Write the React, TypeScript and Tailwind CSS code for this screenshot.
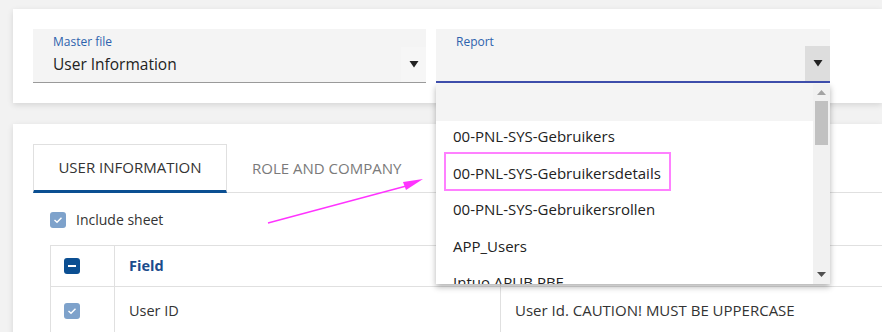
import React from 'react';

const font = { fontFamily: '"Open Sans", "Liberation Sans", sans-serif' };

const reports = [
  '',
  '00-PNL-SYS-Gebruikers',
  '00-PNL-SYS-Gebruikersdetails',
  '00-PNL-SYS-Gebruikersrollen',
  'APP_Users',
  'Intuo APUB PBE',
];

function Caret({ className = '' }: { className?: string }) {
  return (
    <svg width="10" height="7" viewBox="0 0 10 7" className={className}>
      <path d="M0.5 0 L9.5 0 L5 6.5 Z" fill="currentColor" />
    </svg>
  );
}

function Check({ dark = false, minus = false }: { dark?: boolean; minus?: boolean }) {
  return (
    <span
      className={`flex items-center justify-center w-4 h-4 rounded-[3px] ${dark ? 'bg-[#0b4f92]' : 'bg-[#7ea2cb]'}`}
    >
      {minus ? (
        <span className="block w-2 h-[2px] bg-white" />
      ) : (
        <svg width="10" height="8" viewBox="0 0 10 8">
          <path d="M1.5 4 L4 6.3 L8.5 1.7" stroke="white" strokeWidth="1.4" fill="none" />
        </svg>
      )}
    </span>
  );
}

export default function App() {
  return (
    <div className="relative w-[882px] h-[332px] overflow-hidden bg-[#f2f2f2] text-[#222]" style={font}>
      {/* Top card with selects */}
      <div className="ml-[13px] mt-[9px] h-[94px] bg-white shadow-[0_2px_6px_rgba(0,0,0,0.12)] pl-5 pt-5">
        <div className="flex gap-[10px]">
          <div className="relative w-[393px] h-[54px] bg-[#f4f4f4] border-b border-[#9a9a9a]">
            <div className="pl-5 pt-[5px] text-[12px] leading-4 text-[#2d62ad]">Master file</div>
            <div className="pl-5 pt-[4px] text-[15.5px] leading-5 text-[#222]">User Information</div>
            <div className="absolute right-0 bottom-0 w-[25px] h-[35px] bg-[#f6f6f6] flex items-center justify-center text-[#222]">
              <Caret />
            </div>
          </div>
          <div className="relative w-[394px] h-[54px] bg-[#f4f4f4] border-b-2 border-[#3f4fae]">
            <div className="pl-5 pt-[5px] text-[12px] leading-4 text-[#2d62ad]">Report</div>
            <div className="absolute right-0 bottom-0 w-[25px] h-[35px] bg-[#dddddd] flex items-center justify-center text-[#222]">
              <Caret />
            </div>
          </div>
        </div>
      </div>

      {/* Second card */}
      <div className="ml-[13px] mt-[21px] h-[220px] bg-white shadow-[0_2px_6px_rgba(0,0,0,0.12)] pl-5 pt-5">
        <div className="flex h-[49px]">
          <div className="w-[194px] border-t border-l border-r border-[#e0e0e0] border-b-[3px] border-b-[#0b4f92] flex items-center justify-center text-[15px] text-[#333]">
            USER INFORMATION
          </div>
          <div className="flex-1 border-b border-[#e0e0e0] flex items-center">
            <span className="pl-[25px] text-[15px] text-[#7a7a7a]">ROLE AND COMPANY</span>
          </div>
        </div>
        <div className="pl-[17px]">
          <div className="flex items-center gap-[10px] h-[52px] pt-[1px]">
            <Check />
            <span className="text-[14px] text-[#333]">Include sheet</span>
          </div>
          <div className="border-t border-l border-[#e0e0e0]">
            <div className="flex h-[41px] border-b border-[#e0e0e0]">
              <div className="w-[64px] border-r border-[#e0e0e0] flex items-center pl-[13px]">
                <Check dark minus />
              </div>
              <div className="w-[386px] border-r border-[#e0e0e0] flex items-center pl-[14px] text-[14.5px] font-bold text-[#1b4c8c]">
                Field
              </div>
              <div className="flex-1" />
            </div>
            <div className="flex h-[48px] border-b border-[#e0e0e0]">
              <div className="w-[64px] border-r border-[#e0e0e0] flex items-center pl-[13px]">
                <Check />
              </div>
              <div className="w-[386px] border-r border-[#e0e0e0] flex items-center pl-[14px] text-[14.5px] text-[#333]">
                User ID
              </div>
              <div className="flex-1 flex items-center pl-[14px] text-[15px] text-[#333]">
                User Id. CAUTION! MUST BE UPPERCASE
              </div>
            </div>
          </div>
        </div>
      </div>

      {/* Open dropdown list */}
      <div className="absolute left-[436px] top-[84px] w-[394px] h-[200px] bg-white shadow-[0_3px_6px_rgba(0,0,0,0.3)] flex">
        <div className="flex-1 overflow-hidden">
          {reports.map((r, i) => (
            <div
              key={i}
              className={`h-[36.5px] flex items-center pl-[17px] pb-[5px] text-[15px] text-[#222] ${i === 0 ? 'bg-[#f4f4f4]' : ''}`}
            >
              {r}
            </div>
          ))}
        </div>
        <div className="w-[17px] bg-[#f1f1f1] flex flex-col items-center">
          <svg width="9" height="5" viewBox="0 0 9 5" className="mt-[6px]">
            <path d="M0 5 L9 5 L4.5 0 Z" fill="#a3a3a3" />
          </svg>
          <div className="mt-[6px] w-[13px] h-[44px] bg-[#c1c1c1]" />
          <div className="flex-1" />
          <svg width="9" height="5" viewBox="0 0 9 5" className="mb-[7px]">
            <path d="M0 0 L9 0 L4.5 5 Z" fill="#505050" />
          </svg>
        </div>
      </div>

      {/* Annotation: highlight box */}
      <div className="absolute left-[444px] top-[152px] w-[227px] h-[39px] border-2 border-[#ff80ff]" />

      {/* Annotation: arrow */}
      <svg className="absolute left-0 top-0" width="882" height="332">
        <line x1="268" y1="223" x2="410" y2="185" stroke="#ff33ff" strokeWidth="1.3" />
        <path d="M423 179 L403 182 L406 190 Z" fill="#ff33ff" />
      </svg>
    </div>
  );
}
